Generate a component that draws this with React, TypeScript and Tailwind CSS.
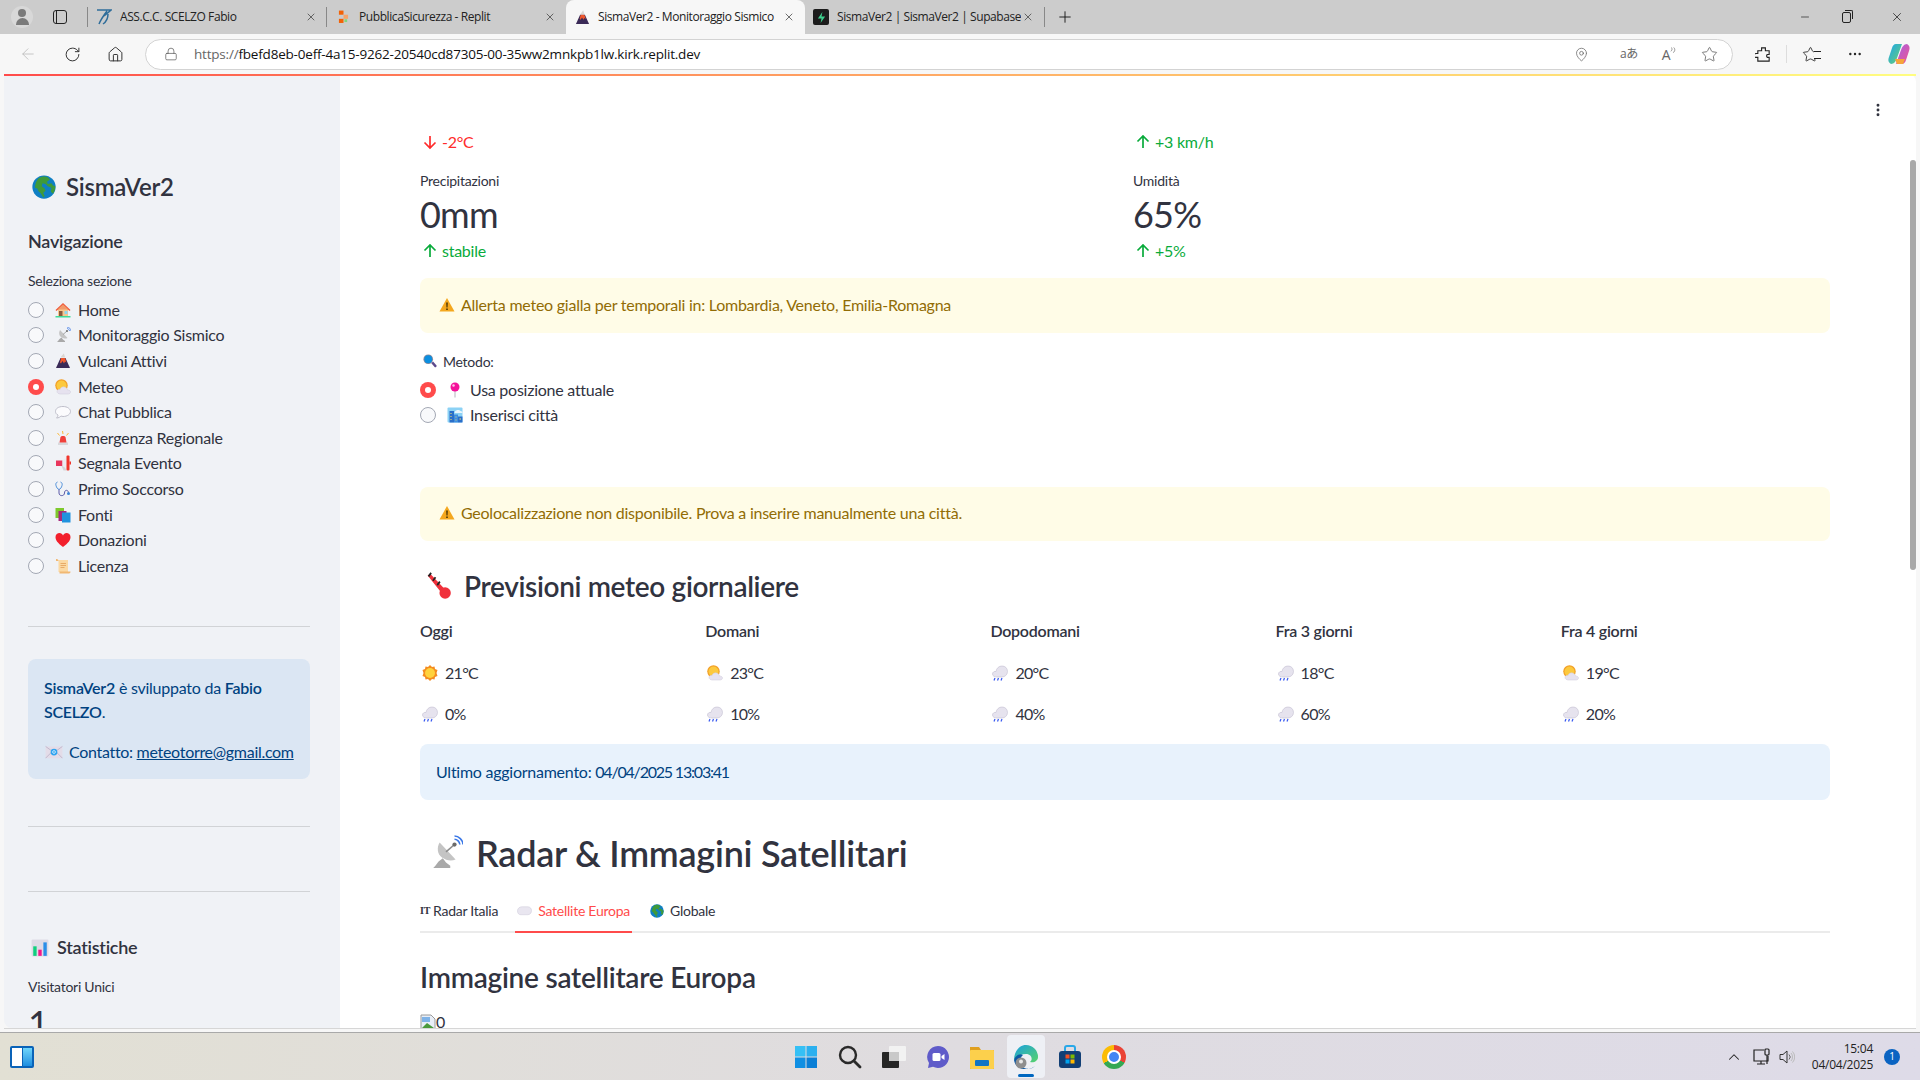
import { ArrowLeft, RotateCw, Home, Lock, MapPin, Star, X, Plus, Minus, ChevronUp, MoreHorizontal, EllipsisVertical } from 'lucide-react'

type EmojiName =
  | 'globe' | 'house' | 'dish' | 'volcano' | 'partly' | 'bubble' | 'siren' | 'megaphone' | 'stetho'
  | 'books' | 'heart' | 'scroll' | 'mail' | 'chart' | 'lens' | 'pin' | 'city' | 'thermo' | 'sun'
  | 'rain' | 'cloud' | 'warn'

const FONT = 'font-["Lato","Noto_Sans",sans-serif] tracking-[-0.25px]'

function Emoji({ name, className }: { name: EmojiName; className?: string }) {
  return (
    <svg viewBox="0 0 32 32" className={className}>
      {name === 'globe' && (
        <>
          <circle cx="16" cy="16" r="15.5" fill="#0f7fc4" />
          <path d="M9 4c3-2 9-3 12-1l3 3-4 3 1 3 5-1 2 3 3 1c0 4-1 7-3 10l-3-3 1-5-5-2-3-3-4-1-1 4 4 3 1 3-3 3 2 4-2 2c-2-3-3-6-6-8l-2-4-3-1c0-5 2-10 5-13z" fill="#3f9a3a" />
        </>
      )}
      {name === 'house' && (
        <>
          <rect x="6" y="14" width="20" height="15" fill="#f6c68d" />
          <path d="M16 2L1 16l2 2L16 7l13 11 2-2z" fill="#ef5a3c" />
          <path d="M16 5L5 15h22z" fill="#f29a6a" />
          <rect x="8" y="18" width="7" height="11" fill="#8a5a3c" />
          <rect x="19" y="18" width="6" height="6" fill="#8fd6ee" />
          <rect x="1" y="28" width="30" height="3" fill="#3fdc9a" />
        </>
      )}
      {name === 'dish' && (
        <>
          <path d="M4 30h16v-2l-4-3-3-4-4 3-3 4z" fill="#a9a9a9" />
          <path d="M10 6c-3 5-2 11 2 14s9 4 13 2z" fill="#c4c4c4" />
          <path d="M16 15l8-7" stroke="#8c8c8c" strokeWidth="1.5" />
          <circle cx="24" cy="8" r="2" fill="#6b6b6b" />
          <path d="M24 3c2.500 0 5 2.500 5 5M24 0c4 0 8 4 8 8" fill="none" stroke="#3b78e7" strokeWidth="1.5" />
        </>
      )}
      {name === 'volcano' && (
        <>
          <path d="M11 10L2 30h28l-9-20z" fill="#3a2a57" />
          <path d="M12 10h8l3 9-3-2-2 4-3-5-3 5-2-2z" fill="#f0562a" />
          <path d="M12 9c0-3 2-3 3-5 1-2 2-3 3-3 0 3 2 5 2 8z" fill="#d9d6d3" />
        </>
      )}
      {name === 'partly' && (
        <>
          <circle cx="13" cy="13" r="12.500" fill="#f29f27" />
          <circle cx="13" cy="13" r="10" fill="#fcc93e" />
          <path d="M11 30c-4 0-7-2-7-5s3-5 6-4c1-4 5-6 9-5s6 4 6 6c4 0 6 2 6 4s-2 4-5 4z" fill="#e6e2ef" stroke="#cfcada" strokeWidth="1" />
        </>
      )}
      {name === 'bubble' && (
        <path d="M16 5C7 5 1 9 1 15c0 3 2 6 5 7 0 2-1 4-3 6 4 0 7-2 9-4 1 0 3 1 4 1 9 0 15-5 15-10S25 5 16 5z" fill="#fbfbfd" stroke="#b8b8c4" strokeWidth="1.800" />
      )}
      {name === 'siren' && (
        <>
          <rect x="6" y="25" width="20" height="5" fill="#d8d8dc" />
          <path d="M9 25l2-11c.5-3 9.500-3 10 0l2 11z" fill="#f0413b" />
          <path d="M15 2l1 6M5 6l4 5M27 6l-4 5" stroke="#fcb93a" strokeWidth="2" />
        </>
      )}
      {name === 'megaphone' && (
        <>
          <path d="M2 11h13v11H2z" fill="#e9365c" />
          <path d="M13 22h6l4 9h-6z" fill="#d5d5d8" />
          <path d="M15 11l10-8v26l-10-7z" fill="#ececf0" />
          <rect x="23" y="1" width="6" height="30" rx="2" fill="#f0352b" />
          <rect x="29" y="13" width="3" height="6" fill="#f0352b" />
        </>
      )}
      {name === 'stetho' && (
        <>
          <path d="M5 2c-3 1-4 4-3 7 1 4 3 7 6 8 3-1 5-4 6-8 1-3 0-6-3-7" fill="none" stroke="#3d84d6" strokeWidth="1.800" />
          <path d="M8 17v7c0 7 11 7 11 0 0-7 7-7 8-1" fill="none" stroke="#5c5aa8" strokeWidth="2" />
          <circle cx="27" cy="25" r="3" fill="#3d84d6" />
        </>
      )}
      {name === 'books' && (
        <>
          <rect x="1" y="2" width="17" height="20" fill="#7ec92c" />
          <rect x="7" y="8" width="16" height="20" fill="#a52a7c" />
          <rect x="14" y="11" width="17" height="20" fill="#2092de" />
        </>
      )}
      {name === 'heart' && (
        <path d="M16 30C5 22 1 16 1 10 1 5 5 2 9 2c3 0 6 2 7 5 1-3 4-5 7-5 4 0 8 3 8 8 0 6-4 12-15 20z" fill="#f21f2c" />
      )}
      {name === 'scroll' && (
        <>
          <path d="M7 4h19v24H7z" fill="#fbd9a3" />
          <path d="M2 2c3 0 5 1 5 4H2zM9 27h22c0 2-1 4-3 4H9z" fill="#f1b873" />
          <path d="M11 11h11M11 15h11M11 19h8" stroke="#e3a058" strokeWidth="1.600" />
        </>
      )}
      {name === 'mail' && (
        <>
          <rect x="1" y="6" width="30" height="21" rx="1" fill="#e3dce8" />
          <path d="M1 6l15 11L31 6M1 27l11-11M31 27L20 16" fill="none" stroke="#b9aec6" strokeWidth="1.400" />
          <circle cx="16" cy="16" r="6" fill="#2fa4f0" />
          <circle cx="16" cy="16" r="2.500" fill="none" stroke="#dff2ff" strokeWidth="1.400" />
        </>
      )}
      {name === 'chart' && (
        <>
          <rect x="1" y="1" width="30" height="30" rx="2" fill="#dedbe6" />
          <rect x="4" y="13" width="6" height="17" fill="#10d07f" />
          <rect x="13" y="19" width="6" height="11" fill="#f5178a" />
          <rect x="22" y="6" width="6" height="24" fill="#2a8ee8" />
        </>
      )}
      {name === 'lens' && (
        <>
          <path d="M19 21l4-4 8 9c1 2-2 5-4 4z" fill="#5c4a8c" />
          <circle cx="12" cy="12" r="11" fill="#8a8a9c" />
          <circle cx="12" cy="12" r="9" fill="#0b8fe0" />
        </>
      )}
      {name === 'pin' && (
        <>
          <rect x="14" y="14" width="4" height="17" fill="#d9d9de" />
          <circle cx="16" cy="10" r="9" fill="#f4119a" />
          <circle cx="13" cy="7" r="2.500" fill="#ffc2e6" />
        </>
      )}
      {name === 'city' && (
        <>
          <rect x="1" y="1" width="30" height="30" rx="2" fill="#8cd2f5" />
          <path d="M16 9c2-4 9-4 11-1 3 0 4 2 4 4H15z" fill="#eaf6fc" />
          <rect x="5" y="8" width="9" height="23" fill="#2a6fc9" />
          <rect x="14" y="15" width="8" height="16" fill="#3d8de0" />
          <rect x="22" y="19" width="9" height="12" fill="#2a6fc9" />
          <path d="M7 12h2v2H7zM7 18h2v2H7zM7 24h2v2H7zM17 19h2v2h-2zM17 25h2v2h-2zM25 23h3v2h-3z" fill="#f5e06a" />
        </>
      )}
      {name === 'thermo' && (
        <>
          <path d="M3 4l3-2 17 18-4 4z" fill="#f0303b" />
          <circle cx="23" cy="24" r="6.500" fill="#f0303b" />
          <path d="M7 1L4 5M12 6L9 10M17 11l-3 4" stroke="#222" strokeWidth="2" />
        </>
      )}
      {name === 'sun' && (
        <>
          <path d="M16 0l4 4 5-1 1 5 5 2-2 6 2 6-5 2-1 5-5-1-4 4-4-4-5 1-1-5-5-2 2-6-2-6 5-2 1-5 5 1z" fill="#f48c1f" />
          <circle cx="16" cy="16" r="10" fill="#ffd23c" />
        </>
      )}
      {name === 'rain' && (
        <>
          <path d="M10 24c-5 0-9-2-9-6s4-6 7-5c1-7 6-11 12-11s11 4 11 11c0 7-6 11-11 11z" fill="#e6e3ee" stroke="#c4c0d2" strokeWidth="1.200" />
          <path d="M6 26l-2 5M13 26l-2 5M20 26l-2 5" stroke="#3c5cf0" strokeWidth="2.500" />
        </>
      )}
      {name === 'cloud' && (
        <path d="M8 25c-4 0-7-3-7-8 0-6 5-9 10-9h12c5 0 8 4 8 8 0 5-3 9-8 9z" fill="#e9e6f0" stroke="#c9c6d6" strokeWidth="1" />
      )}
      {name === 'warn' && (
        <>
          <path d="M16 2L1 29h30z" fill="#f4a71e" />
          <path d="M14.500 11h3l-.5 10h-2zM14.500 23h3v3h-3z" fill="#3b2a00" />
        </>
      )}
    </svg>
  )
}

const SECTIONS: { icon: EmojiName; label: string; on?: boolean }[] = [
  { icon: 'house', label: 'Home' },
  { icon: 'dish', label: 'Monitoraggio Sismico' },
  { icon: 'volcano', label: 'Vulcani Attivi' },
  { icon: 'partly', label: 'Meteo', on: true },
  { icon: 'bubble', label: 'Chat Pubblica' },
  { icon: 'siren', label: 'Emergenza Regionale' },
  { icon: 'megaphone', label: 'Segnala Evento' },
  { icon: 'stetho', label: 'Primo Soccorso' },
  { icon: 'books', label: 'Fonti' },
  { icon: 'heart', label: 'Donazioni' },
  { icon: 'scroll', label: 'Licenza' },
]

const FORECAST: { day: string; icon: EmojiName; temp: string; rain: string }[] = [
  { day: 'Oggi', icon: 'sun', temp: '21°C', rain: '0%' },
  { day: 'Domani', icon: 'partly', temp: '23°C', rain: '10%' },
  { day: 'Dopodomani', icon: 'rain', temp: '20°C', rain: '40%' },
  { day: 'Fra 3 giorni', icon: 'rain', temp: '18°C', rain: '60%' },
  { day: 'Fra 4 giorni', icon: 'partly', temp: '19°C', rain: '20%' },
]

function Radio({ on }: { on?: boolean }) {
  return on ? (
    <span className="w-4 h-4 rounded-full bg-[#ff4b4b] flex items-center justify-center shrink-0">
      <span className="w-1.5 h-1.5 rounded-full bg-white" />
    </span>
  ) : (
    <span className="w-4 h-4 rounded-full border border-[#a3a8b4] bg-[#f8f9fb] shrink-0" />
  )
}

function BrowserTab({ title, icon, active }: { title: string; icon: React.ReactNode; active?: boolean }) {
  return (
    <div className={`w-[239px] h-full flex items-center pl-2 pr-2 relative ${active ? 'bg-[#f7f7f7] rounded-t-lg' : ''}`}>
      <span className="w-4 h-4 flex items-center justify-center shrink-0">{icon}</span>
      <span className="ml-[8px] flex-1 text-[12px] text-[#222] whitespace-nowrap overflow-hidden font-['Open_Sans',sans-serif] tracking-[-0.42px]">{title}</span>
      <X size={12} strokeWidth={1.400} className="ml-[1px] mr-[2px] text-[#333] shrink-0" />
    </div>
  )
}

function ChromeBar() {
  return (
    <>
      <div className="h-[34px] bg-[#cccccc] flex items-end shrink-0">
        <div className="w-[88px] h-full flex items-center relative shrink-0">
          <span className="ml-[11px] w-[22px] h-[22px] rounded-full bg-[#d8d8d8] flex flex-col items-center justify-center gap-[1px]">
            <span className="w-[8px] h-[8px] rounded-full bg-[#7a7a7a]" />
            <span className="w-[13px] h-[7px] rounded-t-full bg-[#7a7a7a]" />
          </span>
          <span className="ml-[20px] w-[14px] h-[14px] border-[1.5px] border-[#222] rounded-[3px] flex">
            <span className="w-[3px] h-full border-r border-[#222]" />
          </span>
          <span className="absolute right-0 top-[7px] h-[20px] w-px bg-[#888]" />
        </div>
        <BrowserTab
          title="ASS.C.C. SCELZO Fabio"
          icon={
            <svg viewBox="0 0 16 18" className="w-4 h-[18px]">
              <path d="M1 2h14L8 8M11 3C8 7 5 11 3 16M12 6c0 4-2 8-5 10" fill="none" stroke="#2f6d9a" strokeWidth="1.500" />
            </svg>
          }
        />
        <span className="w-px h-[20px] bg-[#888] mb-[7px] -ml-px" />
        <BrowserTab
          title="PubblicaSicurezza - Replit"
          icon={
            <svg viewBox="0 0 12 14" className="w-[11px] h-[14px]">
              <rect x="1" y="0" width="5" height="4.500" fill="#f26207" />
              <rect x="6" y="4.500" width="5" height="4.500" fill="#f5a56b" />
              <rect x="1" y="9" width="5" height="4.500" fill="#f26207" />
              <rect x="7" y="9.500" width="3" height="3" fill="#7fd67f" />
            </svg>
          }
        />
        <BrowserTab
          title="SismaVer2 - Monitoraggio Sismico"
          active
          icon={<Emoji name="volcano" className="w-[15px] h-[15px]" />}
        />
        <BrowserTab
          title="SismaVer2 | SismaVer2 | Supabase"
          icon={
            <span className="w-4 h-4 bg-[#1c1c1c] rounded-[2px] flex items-center justify-center">
              <svg viewBox="0 0 10 12" className="w-[9px] h-[11px]">
                <path d="M6 0L1 7h4l-1 5 5-7H5z" fill="#3ecf8e" />
              </svg>
            </span>
          }
        />
        <span className="w-px h-[20px] bg-[#888] mb-[7px]" />
        <Plus size={18} strokeWidth={1.200} className="ml-[11px] mb-2 text-[#111]" />
        <div className="ml-auto flex items-center h-full">
          <Minus size={12} strokeWidth={1.400} className="mr-[31px] text-[#222]" />
          <span className="relative w-[9px] h-[11px] border border-[#222] rounded-[2px] mr-[39px]">
            <span className="absolute -top-[3px] -right-[3px] w-[8px] h-[9px] border-t border-r border-[#222] rounded-tr-[2px]" />
          </span>
          <X size={14} strokeWidth={1.200} className="mr-[16px] text-[#111]" />
        </div>
      </div>
      <div className="h-[40px] bg-[#f7f7f7] flex items-center shrink-0 text-[#333]">
        <ArrowLeft size={18} strokeWidth={1} className="ml-[19px] text-[#b5b5b5]" />
        <RotateCw size={17} strokeWidth={1.400} className="ml-[27px]" />
        <Home size={17} strokeWidth={1.400} className="ml-[26px]" />
        <div className="ml-[21px] h-[31px] w-[1588px] bg-white border border-[#d3d3d3] rounded-full flex items-center">
          <Lock size={14} strokeWidth={1.200} className="ml-[18px] text-[#555]" />
          <span className="ml-[16px] text-[13.5px] font-['Open_Sans',sans-serif] tracking-[-0.2px] text-[#666]">
            https://<span className="text-[#111]">fbefd8eb-0eff-4a15-9262-20540cd87305-00-35ww2mnkpb1lw.kirk.replit.dev</span>
          </span>
          <div className="ml-auto flex items-center text-[#666] pr-[3px]">
            <span className="w-[40px] mr-[8px] flex justify-center">
              <MapPin size={15} strokeWidth={1.200} />
            </span>
            <span className="w-[40px] flex justify-center text-[12px] font-['Open_Sans','Noto_Sans_CJK_JP',sans-serif]">aあ</span>
            <span className="w-[40px] flex justify-center items-start text-[14px] font-['Open_Sans',sans-serif]">
              A
              <svg viewBox="0 0 8 10" className="w-[6px] h-[9px] mt-[2px]">
                <path d="M1 6c2-1 2-3 1-5M4 8c3-2 3-5 1-7" fill="none" stroke="#666" strokeWidth="0.900" />
              </svg>
            </span>
            <span className="w-[40px] flex justify-center">
              <Star size={17} strokeWidth={1.200} />
            </span>
          </div>
        </div>
        <svg viewBox="0 0 18 18" className="ml-[22px] w-[17px] h-[17px]">
          <path d="M7 2h4v3h4v4h-2a2 2 0 000 3h2v4H3v-4H1a2 2 0 010-4h2V5h4z" fill="none" stroke="#222" strokeWidth="1.200" />
        </svg>
        <span className="ml-[14px] w-px h-[18px] bg-[#ddd]" />
        <span className="relative ml-[15px] flex items-center">
          <Star size={17} strokeWidth={1.200} className="text-[#222]" />
          <span className="absolute left-[12px] top-[5px] w-[7px] h-[8px] border-y border-[#222] bg-[#f7f7f7]" />
        </span>
        <MoreHorizontal size={16} strokeWidth={1.600} className="ml-[28px] text-[#222]" />
        <svg viewBox="0 0 24 24" className="ml-[24px] w-[24px] h-[24px]">
          <defs>
            <linearGradient id="cp1" x1="0" y1="0" x2="1" y2="1">
              <stop offset="0" stopColor="#1aa6ef" />
              <stop offset="1" stopColor="#6fd16a" />
            </linearGradient>
            <linearGradient id="cp2" x1="0" y1="0" x2="1" y2="1">
              <stop offset="0" stopColor="#a45fe8" />
              <stop offset="1" stopColor="#f0568d" />
            </linearGradient>
          </defs>
          <path d="M9 2h6l-5 14c-1 3-3 6-6 6-3-2-3-4-2-7l3-9c.5-2 2-4 4-4z" fill="url(#cp1)" />
          <path d="M15 22H9l5-14c1-3 3-6 6-6 3 2 3 4 2 7l-3 9c-.5 2-2 4-4 4z" fill="url(#cp2)" />
          <path d="M10 22h6l2-5H8z" fill="#f6a53a" />
        </svg>
      </div>
    </>
  )
}

function Sidebar() {
  return (
    <aside className="w-[336px] shrink-0 bg-[#f0f2f6] pl-6 pr-[30px] pt-[97px] overflow-hidden rounded-bl-lg text-[#31333f]">
      <div className="h-8 flex items-center text-[24px] font-semibold">
        <Emoji name="globe" className="w-6 h-6 ml-1 mr-[10px]" />
        SismaVer2
      </div>
      <div className="mt-6 h-[30px] flex items-center text-[18px] font-semibold -translate-y-px">Navigazione</div>
      <div className="mt-[13px] h-5 flex items-center text-[14px]">Seleziona sezione</div>
      <div className="mt-[7px]">
        {SECTIONS.map(s => (
          <div key={s.label} className="h-[25.6px] flex items-center text-[16px]">
            <Radio on={s.on} />
            <Emoji name={s.icon} className="w-4 h-4 ml-[11px] mr-[7px] shrink-0" />
            {s.label}
          </div>
        ))}
      </div>
      <hr className="mt-[47px] border-[#d1d3d6]" />
      <div className="mt-[32px] h-[120px] bg-[#dbe6f3] rounded-lg px-4 pt-[17px] text-[16px] leading-[24px] text-[#004280]">
        <p>
          <b className="font-semibold">SismaVer2</b> è sviluppato da <b className="font-semibold">Fabio SCELZO</b>.
        </p>
        <p className="mt-4 flex items-center whitespace-nowrap tracking-[-0.3px]">
          <Emoji name="mail" className="w-[18px] h-[18px] shrink-0 ml-[1px] mr-[6px]" />
          Contatto:&nbsp;<u>meteotorre@gmail.com</u>
        </p>
      </div>
      <hr className="mt-[47px] border-[#d1d3d6]" />
      <hr className="mt-[64px] border-[#d1d3d6]" />
      <div className="mt-[41px] h-[30px] flex items-center text-[18px] font-semibold">
        <Emoji name="chart" className="w-[18px] h-[18px] ml-[3px] mr-2" />
        Statistiche
      </div>
      <div className="mt-[14px] h-5 flex items-center text-[14px]">Visitatori Unici</div>
      <div className="mt-1 text-[36px] leading-[44px]">1</div>
    </aside>
  )
}

function Metric({ label, value, delta }: { label: string; value: string; delta: string }) {
  return (
    <div>
      <div className="h-5 flex items-center text-[14px]">{label}</div>
      <div className="mt-[3px] h-[44px] flex items-center text-[36px] tracking-[-0.8px] -translate-y-px">{value}</div>
      <Delta text={delta} />
    </div>
  )
}

function Delta({ text, down }: { text: string; down?: boolean }) {
  return (
    <div className={`mt-[2px] h-6 flex items-center text-[16px] ${down ? 'text-[#ff2b2b]' : 'text-[#09ab3b]'}`}>
      <svg viewBox="0 0 16 16" className={`w-4 h-4 ml-[2px] mr-[4px] ${down ? 'rotate-180' : ''}`}>
        <path d="M8 14V2M2.500 7.500L8 2l5.500 5.500" fill="none" stroke="currentColor" strokeWidth="1.700" />
      </svg>
      {text}
    </div>
  )
}

function Alert({ children, className }: { children: React.ReactNode; className?: string }) {
  return (
    <div className={`rounded-lg bg-[#fffce7] text-[#926c05] px-[19px] pb-[2px] flex items-center text-[16px] ${className ?? ''}`}>
      <Emoji name="warn" className="w-4 h-4 mr-[6px]" />
      {children}
    </div>
  )
}

function MainPane() {
  return (
    <main className="relative flex-1 bg-white overflow-hidden rounded-tr-lg text-[#31333f]">
      <EllipsisVertical size={16} strokeWidth={2.400} className="absolute left-[1530px] top-[28px] text-[#31333f]" />
      <div className="absolute right-0 top-[86px] h-[410px] w-[6px] rounded-full bg-[#a8a8a8]" />
      <div className="pl-20 pr-[86px] pt-[54px]">
        <div className="grid grid-cols-2 gap-x-4">
          <Delta text="-2°C" down />
          <Delta text="+3 km/h" />
        </div>
        <div className="mt-[16px] grid grid-cols-2 gap-x-4">
          <Metric label="Precipitazioni" value="0mm" delta="stabile" />
          <Metric label="Umidità" value="65%" delta="+5%" />
        </div>
        <Alert className="mt-[15px] h-[55px]">Allerta meteo gialla per temporali in: Lombardia, Veneto, Emilia-Romagna</Alert>
        <div className="mt-[18px] h-5 flex items-center text-[14px]">
          <Emoji name="lens" className="w-[14px] h-[14px] mx-[3px]" />
          <span className="ml-[3px]">Metodo:</span>
        </div>
        <div className="mt-[6px]">
          <div className="h-[25.6px] flex items-center text-[16px]">
            <Radio on />
            <Emoji name="pin" className="w-4 h-4 ml-[11px] mr-[7px]" />
            Usa posizione attuale
          </div>
          <div className="h-[25.6px] flex items-center text-[16px]">
            <Radio />
            <Emoji name="city" className="w-4 h-4 ml-[11px] mr-[7px]" />
            Inserisci città
          </div>
        </div>
        <Alert className="mt-[58.6px] h-[54px]">Geolocalizzazione non disponibile. Prova a inserire manualmente una città.</Alert>
        <div className="mt-[25px] h-10 flex items-center text-[28px] font-semibold tracking-[-0.35px]">
          <Emoji name="thermo" className="w-7 h-7 ml-[5px] mr-[11px]" />
          Previsioni meteo giornaliere
        </div>
        <div className="mt-[13px] grid grid-cols-5 gap-x-4">
          {FORECAST.map(f => (
            <div key={f.day} className="text-[16px]">
              <div className="h-6 flex items-center font-semibold">{f.day}</div>
              <div className="mt-[18px] h-6 flex items-center tracking-[-0.7px]">
                <Emoji name={f.icon} className="w-4 h-4 ml-[2px] mr-[7px]" />
                {f.temp}
              </div>
              <div className="mt-[17px] h-6 flex items-center tracking-[-0.7px]">
                <Emoji name="rain" className="w-4 h-4 ml-[2px] mr-[7px]" />
                {f.rain}
              </div>
            </div>
          ))}
        </div>
        <div className="mt-[18px] h-[56px] rounded-lg bg-[#e8f2fc] text-[#004280] px-4 flex items-center text-[16px] whitespace-pre">
          Ultimo aggiornamento: <span className="tracking-[-1.2px]">04/04/2025 13:03:41</span>
        </div>
        <div className="mt-[23px] h-[60px] flex items-center text-[36px] font-semibold">
          <Emoji name="dish" className="w-[34px] h-[36px] ml-[9px] mr-[13px]" />
          Radar &amp; Immagini Satellitari
        </div>
        <div className="mt-[10px] h-10 pb-[2px] flex border-b-2 border-[#ebebeb] text-[14px]">
          <div className="flex items-center h-full pr-[17px]">
            <span className="text-[10px] font-bold font-['Liberation_Serif',serif] mr-[3px]">IT</span>
            Radar Italia
          </div>
          <div className="flex items-center h-10 pb-[2px] px-[2px] border-b-2 border-[#ff4b4b] text-[#ff4b4b]">
            <Emoji name="cloud" className="w-[15px] h-[15px] mr-[6px]" />
            Satellite Europa
          </div>
          <div className="flex items-center h-full pl-[18px]">
            <Emoji name="globe" className="w-[14px] h-[14px] mr-[6px]" />
            <span className="text-[#31333f]">Globale</span>
          </div>
        </div>
        <div className="mt-[24px] h-10 flex items-center text-[28px] font-semibold tracking-[-0.24px]">Immagine satellitare Europa</div>
        <div className="mt-[17px] flex items-end text-[16px] leading-[16px]">
          <svg viewBox="0 0 16 16" className="w-4 h-4">
            <path d="M1 1h10l4 4v10H1z" fill="#e8eef7" stroke="#9a9a9a" />
            <path d="M2 14l5-5 7 5z" fill="#4a9a3c" />
            <path d="M2 3h8v5H2z" fill="#7fb3e8" />
          </svg>
          0
        </div>
      </div>
    </main>
  )
}

function Dock({ children, active }: { children: React.ReactNode; active?: boolean }) {
  return (
    <span className={`w-[44px] h-full flex items-center justify-center ${active ? 'relative' : ''}`}>
      {active && <span className="absolute left-[3px] right-[3px] top-[2px] bottom-[2px] bg-[#eef0f5] rounded-[4px]" />}
      <span className="relative flex">{children}</span>
      {active && <span className="absolute bottom-[3px] w-[16px] h-[3px] rounded-full bg-[#0067c0]" />}
    </span>
  )
}

function Taskbar() {
  return (
    <div className="h-[48px] shrink-0 border-t border-[#a9a9a9] bg-gradient-to-r from-[#e2e0d4] via-[#dfdce0] to-[#dedbe8] flex items-center">
      <div className="flex-1 flex items-center">
        <span className="ml-[10px] w-[24px] h-[22px] bg-[#0a63b8] rounded-[2px] flex gap-[1px] p-[2px]">
          <span className="flex-1 bg-white" />
          <span className="flex-1 bg-gradient-to-b from-[#6fd6fb] to-[#1a8ee0]" />
        </span>
      </div>
      <div className="flex items-center h-full">
        <Dock>
          <svg viewBox="0 0 24 24" className="w-6 h-6">
            <rect x="1" y="1" width="10.500" height="10.500" fill="#35c0f5" />
            <rect x="12.500" y="1" width="10.500" height="10.500" fill="#2bb0ef" />
            <rect x="1" y="12.500" width="10.500" height="10.500" fill="#0f8fe3" />
            <rect x="12.500" y="12.500" width="10.500" height="10.500" fill="#0a7fd6" />
          </svg>
        </Dock>
        <Dock>
          <svg viewBox="0 0 24 24" className="w-6 h-6">
            <circle cx="10" cy="10" r="8" fill="none" stroke="#2a2a2a" strokeWidth="2.400" />
            <path d="M16 16l6 6" stroke="#2a2a2a" strokeWidth="2.800" strokeLinecap="round" />
          </svg>
        </Dock>
        <Dock>
          <svg viewBox="0 0 24 24" className="w-6 h-6">
            <rect x="7" y="1" width="17" height="15" rx="1" fill="#f2f2f2" />
            <rect x="0" y="7" width="17" height="16" rx="1" fill="#262626" />
            <rect x="7" y="7" width="10" height="9" fill="#c9c9c9" />
          </svg>
        </Dock>
        <Dock>
          <svg viewBox="0 0 24 24" className="w-6 h-6">
            <path d="M12 1a11 11 0 11-5 20.800L2 23l1-5A11 11 0 0112 1z" fill="#5f5bc9" />
            <rect x="6.500" y="8" width="8" height="8" rx="1.500" fill="#fff" />
            <path d="M15.500 11l3-2v6l-3-2z" fill="#fff" />
          </svg>
        </Dock>
        <Dock>
          <svg viewBox="0 0 24 24" className="w-6 h-6">
            <path d="M0 2h9l2 3h13v19H0z" fill="#e0a020" />
            <rect x="0" y="5" width="24" height="19" rx="1" fill="#fcd04c" />
            <rect x="5" y="15" width="14" height="6" rx="1" fill="#1275c4" />
          </svg>
        </Dock>
        <Dock active>
          <svg viewBox="0 0 24 24" className="w-6 h-6">
            <defs>
              <linearGradient id="edge" x1="0" y1="0" x2="1" y2="1">
                <stop offset="0" stopColor="#1aa0e0" />
                <stop offset="1" stopColor="#58d36a" />
              </linearGradient>
            </defs>
            <path d="M12 0a12 12 0 0112 12c0 4-4 6-8 5 3-2 2-8-4-8-6 0-10 3-12 6 0-8 5-15 12-15z" fill="url(#edge)" />
            <path d="M0 15c1-4 6-7 9-5-4 3-4 10 1 13 6 2 9 0 11-2-4 4-19 6-21-6z" fill="#0c59a4" />
            <circle cx="7" cy="18" r="5.500" fill="#8e8e8e" />
            <circle cx="7" cy="16.500" r="2" fill="#e8e8e8" />
          </svg>
        </Dock>
        <Dock>
          <svg viewBox="0 0 24 24" className="w-6 h-6">
            <path d="M7 6V3a2 2 0 012-2h6a2 2 0 012 2v3" fill="none" stroke="#29a8e8" strokeWidth="2" />
            <rect x="1" y="6" width="22" height="17" rx="3" fill="#123f75" />
            <rect x="7.500" y="9.500" width="4" height="4" fill="#f25022" />
            <rect x="12.500" y="9.500" width="4" height="4" fill="#7fba00" />
            <rect x="7.500" y="14.500" width="4" height="4" fill="#00a4ef" />
            <rect x="12.500" y="14.500" width="4" height="4" fill="#ffb900" />
          </svg>
        </Dock>
        <Dock>
          <span className="w-[24px] h-[24px] rounded-full bg-[conic-gradient(#ea4335_0_33%,#34a853_33%_66%,#fbbc05_66%_100%)] flex items-center justify-center">
            <span className="w-[10px] h-[10px] rounded-full bg-[#4285f4] border-2 border-white box-content" />
          </span>
        </Dock>
      </div>
      <div className="flex-1 flex items-center justify-end text-[#222]">
        <ChevronUp size={18} strokeWidth={1.400} />
        <svg viewBox="0 0 18 18" className="ml-[10px] w-[18px] h-[18px]">
          <path d="M11 2H1v11h14V8M4 16h8M8 13v3" fill="none" stroke="#222" strokeWidth="1.200" />
          <rect x="12" y="1" width="4" height="6" rx="1" fill="none" stroke="#222" strokeWidth="1.200" />
          <path d="M14 7v9" stroke="#222" strokeWidth="1.200" />
        </svg>
        <svg viewBox="0 0 16 16" className="ml-[8px] w-4 h-4">
          <path d="M1 5.500h3L8 2v12l-4-3.500H1z" fill="none" stroke="#333" strokeWidth="1" />
          <path d="M10 5.500a3.500 3.500 0 010 5" fill="none" stroke="#666" strokeWidth="1" />
          <path d="M12 4a6 6 0 010 8M13.500 2.500a8 8 0 010 11" fill="none" stroke="#bbb" strokeWidth="1" />
        </svg>
        <div className="ml-[17px] text-right text-[12px] leading-[16px] font-['Open_Sans',sans-serif] text-[#222]">
          <div>15:04</div>
          <div>04/04/2025</div>
        </div>
        <span className="ml-[11px] mr-[20px] w-4 h-4 rounded-full bg-[#0a63c2] text-white text-[10px] flex items-center justify-center font-['Open_Sans',sans-serif]">1</span>
      </div>
    </div>
  )
}

export default function App() {
  return (
    <div className={`h-screen w-screen flex flex-col overflow-hidden bg-[#f7f7f7] ${FONT}`}>
      <ChromeBar />
      <div className="relative flex-1 flex min-h-0 ml-1 mr-1 mb-[3px] border-b border-[#d6d6d6]">
        <div className="absolute left-0 right-0 top-0 h-[2px] z-10 bg-gradient-to-r from-[#ff4b4b] to-[#fffd80]" />
        <Sidebar />
        <MainPane />
      </div>
      <Taskbar />
    </div>
  )
}
